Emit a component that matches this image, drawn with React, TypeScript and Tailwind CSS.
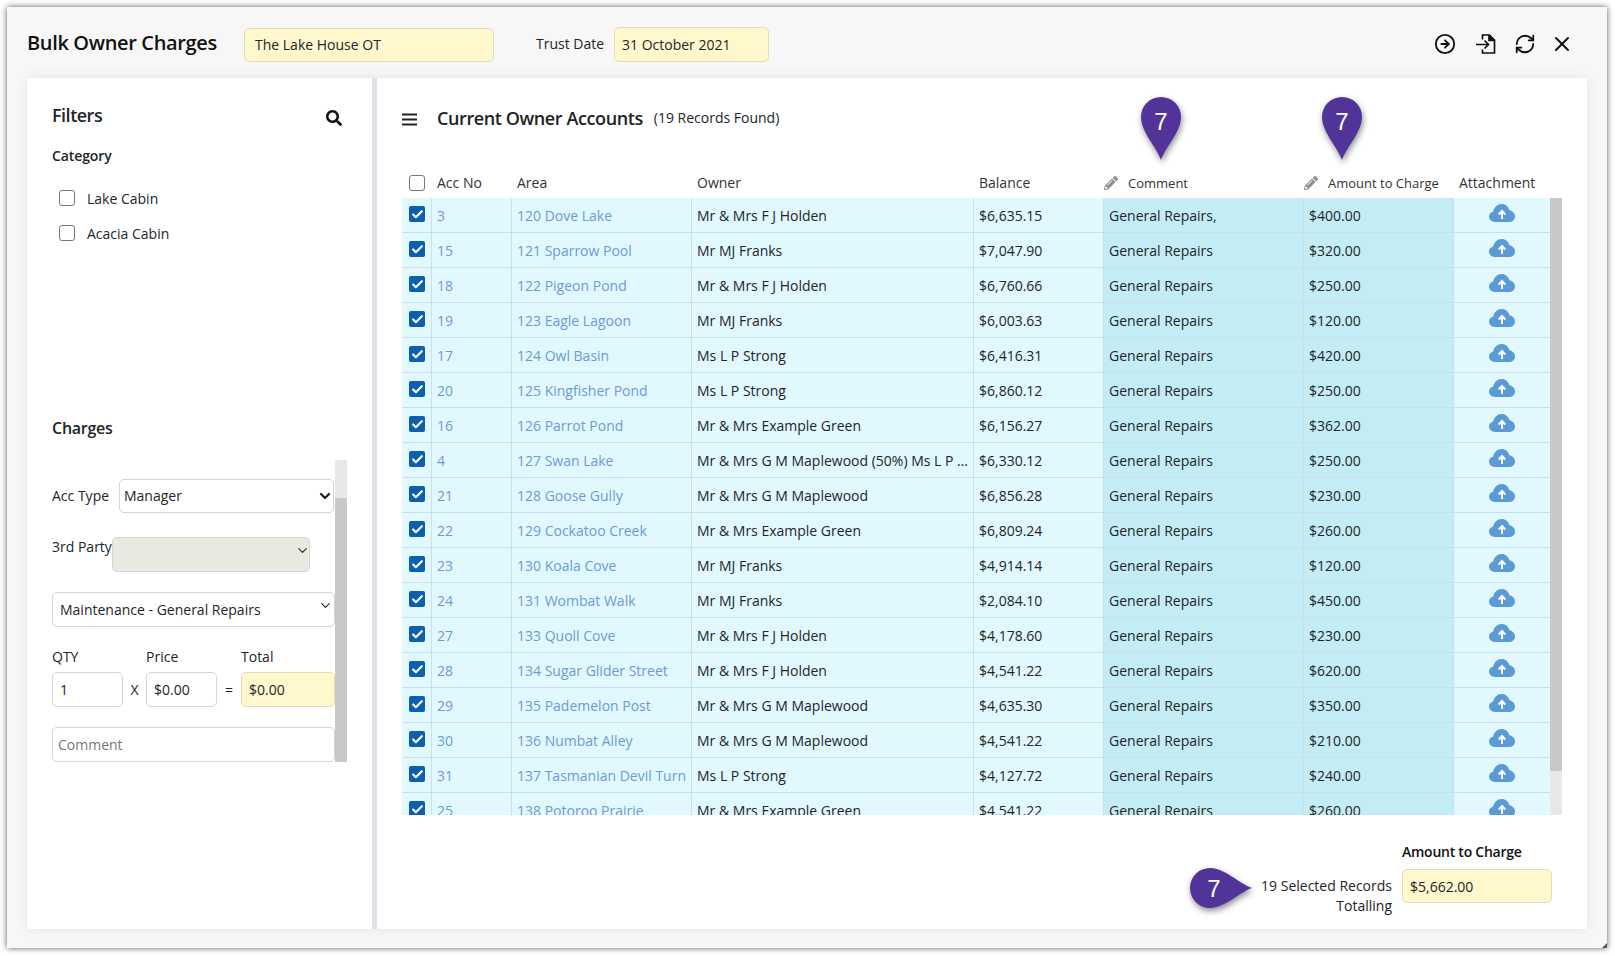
import { Check, ChevronDown, CircleArrowRight, RefreshCw, X } from "lucide-react";
import { FaPencilAlt, FaSearch } from "react-icons/fa";

const rows = [
  ["3", "120 Dove Lake", "Mr & Mrs F J Holden", "$6,635.15", "General Repairs,", "$400.00"],
  ["15", "121 Sparrow Pool", "Mr MJ Franks", "$7,047.90", "General Repairs", "$320.00"],
  ["18", "122 Pigeon Pond", "Mr & Mrs F J Holden", "$6,760.66", "General Repairs", "$250.00"],
  ["19", "123 Eagle Lagoon", "Mr MJ Franks", "$6,003.63", "General Repairs", "$120.00"],
  ["17", "124 Owl Basin", "Ms L P Strong", "$6,416.31", "General Repairs", "$420.00"],
  ["20", "125 Kingfisher Pond", "Ms L P Strong", "$6,860.12", "General Repairs", "$250.00"],
  ["16", "126 Parrot Pond", "Mr & Mrs Example Green", "$6,156.27", "General Repairs", "$362.00"],
  ["4", "127 Swan Lake", "Mr & Mrs G M Maplewood (50%) Ms L P Strong (50%)", "$6,330.12", "General Repairs", "$250.00"],
  ["21", "128 Goose Gully", "Mr & Mrs G M Maplewood", "$6,856.28", "General Repairs", "$230.00"],
  ["22", "129 Cockatoo Creek", "Mr & Mrs Example Green", "$6,809.24", "General Repairs", "$260.00"],
  ["23", "130 Koala Cove", "Mr MJ Franks", "$4,914.14", "General Repairs", "$120.00"],
  ["24", "131 Wombat Walk", "Mr MJ Franks", "$2,084.10", "General Repairs", "$450.00"],
  ["27", "133 Quoll Cove", "Mr & Mrs F J Holden", "$4,178.60", "General Repairs", "$230.00"],
  ["28", "134 Sugar Glider Street", "Mr & Mrs F J Holden", "$4,541.22", "General Repairs", "$620.00"],
  ["29", "135 Pademelon Post", "Mr & Mrs G M Maplewood", "$4,635.30", "General Repairs", "$350.00"],
  ["30", "136 Numbat Alley", "Mr & Mrs G M Maplewood", "$4,541.22", "General Repairs", "$210.00"],
  ["31", "137 Tasmanian Devil Turn", "Ms L P Strong", "$4,127.72", "General Repairs", "$240.00"],
  ["25", "138 Potoroo Prairie", "Mr & Mrs Example Green", "$4,541.22", "General Repairs", "$260.00"],
];

const inputClass = "h-[35px] w-full rounded-[5px] border border-[#d4d4d4] bg-white px-[7px] text-sm text-[#212529] outline-none";
const cellClass = "h-[35px] border-r border-b border-[#c8e0e8] pt-[2px] text-sm";

function Pin({ className }: { className: string }) {
  return (
    <div className={`absolute h-[63px] w-[40px] ${className}`}>
      <svg viewBox="0 0 40 63" className="h-full w-full overflow-visible drop-shadow-[1px_3px_3px_rgba(0,0,0,0.45)]">
        <path d="M20 63C15 49 0 35 0 20A20 20 0 0 1 40 20C40 35 25 49 20 63Z" fill="#523399" />
      </svg>
      <span className="absolute top-[10px] left-0 w-full text-center font-['Liberation_Sans',sans-serif] text-[24px] leading-[30px] text-white">7</span>
    </div>
  );
}

function Tick() {
  return (
    <span className="flex size-4 items-center justify-center rounded-[2px] bg-[#0b5fae]">
      <Check size={13} strokeWidth={4} className="text-white" />
    </span>
  );
}

function CloudUp() {
  return (
    <svg viewBox="0 0 26 18" className="mx-auto mb-[4px] block h-[18px] w-[26px]">
      <path
        d="M6 18C2.5 18 0 15.6 0 12.6C0 10 1.7 8 4.2 7.5C5 3.2 8.5 0 12.6 0C16.4 0 19.5 2.6 20.4 6.2C23.6 6.8 26 9.4 26 12.5C26 15.6 23.5 18 20.5 18Z"
        fill="#5b9bd5"
      />
      <path d="M13 15V7.5M9.7 10.5L13 7L16.3 10.5" fill="none" stroke="#fff" strokeWidth="2" />
    </svg>
  );
}

function Field({ value, disabled, thick, className, chevron }: { value: string; disabled?: boolean; thick?: boolean; className: string; chevron: string }) {
  return (
    <div className={`relative ${className}`}>
      <select
        disabled={disabled}
        defaultValue={value}
        className={`h-full w-full appearance-none rounded-[5px] border border-[#d4d4d4] text-sm text-[#212529] outline-none ${disabled ? "bg-[#e9e9e1]" : "bg-white"} ${thick ? "px-[4px]" : "px-[7px]"}`}
      >
        <option value={value}>{value}</option>
      </select>
      <ChevronDown size={thick ? 16 : 15} strokeWidth={thick ? 3.4 : 1.75} className={`absolute text-[#222] ${chevron}`} />
    </div>
  );
}

export default function App() {
  return (
    <div className="h-[956px] w-[1615px] bg-white p-[7px] pb-[8px] font-['Open_Sans',sans-serif] text-[#212529]">
      <div className="relative flex h-[941px] w-[1600px] flex-col bg-[#f7f7f7] px-[20px] pb-[19px] shadow-[0_0_6px_rgba(0,0,0,0.65)]">
        {/* Title bar */}
        <div className="flex h-[71px] shrink-0 items-center">
          <h1 className="mt-[1px] w-[217px] text-[20px] font-semibold tracking-[-0.35px] text-[#111]">Bulk Owner Charges</h1>
          <input readOnly value="The Lake House OT" className="mt-[4px] h-[34px] w-[250px] rounded-[5px] border border-[#e3dcb8] bg-[#fff8cd] px-[10px] text-sm outline-none" />
          <span className="mt-[2px] ml-[42px] w-[78px] text-sm">Trust Date</span>
          <input readOnly value="31 October 2021" className="mt-[4px] h-[35px] w-[155px] rounded-[5px] border border-[#e3dcb8] bg-[#fff8cd] px-[7px] text-sm outline-none" />
          <div className="mt-[2px] ml-auto flex items-center pr-[13px] text-[#111]">
            <CircleArrowRight size={22} strokeWidth={2} />
            <svg viewBox="0 0 20 20" className="ml-[20px] h-[20px] w-[20px]" fill="none" stroke="currentColor" strokeWidth="1.7">
              <path d="M6.5 5.5V1H13.5L18.5 6V19H6.5V15.5" />
              <path d="M13 1V6.5H18.5" fill="currentColor" />
              <path d="M0 10.5H12M8.5 6.5L12.5 10.5L8.5 14.5" />
            </svg>
            <RefreshCw size={22} strokeWidth={2} className="ml-[18px]" />
            <X size={24} strokeWidth={2} className="ml-[14px]" />
          </div>
        </div>

        <div className="flex min-h-0 flex-1 shadow-[0_0_12px_rgba(0,0,0,0.08)]">
          {/* Filters */}
          <aside className="w-[345px] shrink-0 bg-white pl-[25px]">
            <div className="mt-[26px] flex h-[22px] items-center justify-between pr-[30px]">
              <h2 className="text-lg font-semibold tracking-[-0.5px]">Filters</h2>
              <FaSearch size={16} className="mt-[5px] text-[#111]" />
            </div>
            <div className="mt-[20px] h-[20px] text-sm font-semibold tracking-[-0.1px]">Category</div>
            <div className="mt-[14px]">
              {["Lake Cabin", "Acacia Cabin"].map((name) => (
                <label key={name} className="flex h-[35px] items-center gap-[12px] pl-[7px] text-sm">
                  <input type="checkbox" className="size-4 appearance-none rounded-[3px] border border-[#777] bg-white" />
                  <span className="mt-[2px]">{name}</span>
                </label>
              ))}
            </div>

            <h2 className="mt-[167px] h-[22px] text-base leading-[22px] font-semibold tracking-[-0.25px]">Charges</h2>
            <div className="mt-[21px] flex h-[302px]">
              <div className="w-[283px] shrink-0 pt-[19px]">
                <div className="flex h-[34px] items-center">
                  <span className="w-[67px] shrink-0 text-sm">Acc Type</span>
                  <Field value="Manager" thick className="h-[34px] w-[215px]" chevron="top-[9px] right-[1px]" />
                </div>
                <div className="mt-[24px] flex h-[35px] items-start">
                  <span className="w-[60px] shrink-0 text-sm leading-[20px]">3rd Party</span>
                  <Field value="" disabled className="h-[35px] w-[198px]" chevron="top-[6px] right-0" />
                </div>
                <Field value="Maintenance - General Repairs" className="mt-[20px] h-[35px] w-full" chevron="top-[6px] right-[2px]" />
                <div className="mt-[20px] grid grid-cols-[71px_23px_71px_24px_94px] text-sm">
                  <span className="col-span-2 h-[25px]">QTY</span>
                  <span className="col-span-2 h-[25px]">Price</span>
                  <span className="h-[25px]">Total</span>
                  <input readOnly value="1" className={inputClass} />
                  <span className="self-center text-center">X</span>
                  <input readOnly value="$0.00" className={inputClass} />
                  <span className="self-center text-center">=</span>
                  <input readOnly value="$0.00" className="h-[35px] w-full rounded-[5px] border border-[#e3dcb8] bg-[#fff8cd] px-[7px] text-sm outline-none" />
                </div>
                <input
                  placeholder="Comment"
                  className="mt-[20px] h-[35px] w-full rounded-[5px] border border-[#d4d4d4] bg-white px-[5px] text-sm outline-none placeholder:text-[#777]"
                />
              </div>
              <div className="w-[12px] bg-[#e8e8e8] pt-[38px]">
                <div className="h-full bg-[#c8c8c8]" />
              </div>
            </div>
          </aside>

          <div className="w-[5px] shrink-0 bg-[#e2dfe8]" />

          {/* Accounts */}
          <main className="relative min-w-0 flex-1 bg-white pr-[25px] pl-[25px]">
            <div className="mt-[25px] flex h-[30px] items-center">
              <svg viewBox="0 0 15 13" className="mt-[2px] h-[13px] w-[15px] text-[#222]">
                <path d="M0 1.5H15M0 6.5H15M0 11.5H15" stroke="currentColor" strokeWidth="2" />
              </svg>
              <h2 className="ml-[20px] text-lg font-semibold tracking-[-0.4px] text-[#222]">Current Owner Accounts</h2>
              <span className="ml-[11px] text-sm">(19 Records Found)</span>
            </div>

            <div className="mt-[33px] flex h-[649px]">
              <div className="min-w-0 flex-1 overflow-hidden">
                <table className="w-[1149px] table-fixed border-separate border-spacing-0">
                  <colgroup>
                    <col className="w-[30px]" />
                    <col className="w-[80px]" />
                    <col className="w-[180px]" />
                    <col className="w-[282px]" />
                    <col className="w-[130px]" />
                    <col className="w-[200px]" />
                    <col className="w-[150px]" />
                    <col className="w-[97px]" />
                  </colgroup>
                  <thead>
                    <tr className="h-[32px] text-left text-sm font-medium text-[#333]">
                      <th className="pb-[1px] pl-[7px] align-middle">
                        <input type="checkbox" className="mt-[3px] block size-4 appearance-none rounded-[3px] border border-[#777] bg-white" />
                      </th>
                      <th className="px-[5px] pt-[2px] font-medium">Acc No</th>
                      <th className="px-[5px] pt-[2px] font-medium">Area</th>
                      <th className="px-[5px] pt-[2px] font-medium">Owner</th>
                      <th className="px-[5px] pt-[2px] font-medium">Balance</th>
                      <th className="pt-[2px] font-medium">
                        <span className="flex items-center text-[13px]">
                          <FaPencilAlt size={14} className="text-[#8f8f8f]" />
                          <span className="ml-[10px]">Comment</span>
                        </span>
                      </th>
                      <th className="pt-[2px] font-medium">
                        <span className="flex items-center text-[13px]">
                          <FaPencilAlt size={14} className="text-[#8f8f8f]" />
                          <span className="ml-[10px] whitespace-nowrap">Amount to Charge</span>
                        </span>
                      </th>
                      <th className="px-[5px] pt-[2px] font-medium">Attachment</th>
                    </tr>
                  </thead>
                  <tbody className="bg-[#e1f8ff]">
                    {rows.map((row) => (
                      <tr key={row[0]}>
                        <td className={`${cellClass} !pt-0`}>
                          <div className="mb-[2px] flex justify-center pl-[1px]"><Tick /></div>
                        </td>
                        <td className={`${cellClass} px-[5px] text-[#6d9bd3]`}>{row[0]}</td>
                        <td className={`${cellClass} truncate pr-[1px] pl-[5px] text-[#6d9bd3]`}>{row[1]}</td>
                        <td className={`${cellClass} truncate pr-[2px] pl-[5px]`}>{row[2]}</td>
                        <td className={`${cellClass} px-[5px]`}>{row[3]}</td>
                        <td className={`${cellClass} bg-[#c3ecf5] px-[5px]`}>{row[4]}</td>
                        <td className={`${cellClass} bg-[#c3ecf5] px-[5px]`}>{row[5]}</td>
                        <td className={`${cellClass} !border-r-0 pr-[2px] !pt-0`}>
                          <CloudUp />
                        </td>
                      </tr>
                    ))}
                  </tbody>
                </table>
              </div>
              <div className="mt-[32px] w-[12px] shrink-0 bg-[#e8e8e8]">
                <div className="h-[573px] bg-[#c8c8c8]" />
              </div>
            </div>

            <div className="mt-[27px] flex justify-end pr-[10px]">
              <div className="mt-[34px] mr-[10px] text-right text-sm leading-[20px]">
                <div>19 Selected Records</div>
                <div>Totalling</div>
              </div>
              <div className="w-[150px]">
                <div className="mb-[7px] h-[20px] text-sm leading-[20px] font-semibold tracking-[-0.25px] whitespace-nowrap text-[#111]">Amount to Charge</div>
                <input readOnly value="$5,662.00" className="h-[34px] w-full rounded-[5px] border border-[#e3dcb8] bg-[#fff8cd] px-[7px] text-sm outline-none" />
              </div>
            </div>

            <Pin className="top-[19px] left-[764px]" />
            <Pin className="top-[19px] left-[945px]" />
            <div className="absolute top-[790px] left-[813px] h-[40px] w-[62px]">
              <svg viewBox="0 0 62 40" className="h-full w-full overflow-visible drop-shadow-[1px_3px_3px_rgba(0,0,0,0.45)]">
                <path d="M62 20C48 25 35 40 20 40A20 20 0 0 1 20 0C35 0 48 15 62 20Z" fill="#523399" />
              </svg>
              <span className="absolute top-[6px] left-0 w-[48px] text-center font-['Liberation_Sans',sans-serif] text-[24px] leading-[30px] text-white">7</span>
            </div>
          </main>
        </div>

        <svg viewBox="0 0 5 5" className="absolute right-0 bottom-0 size-[5px]">
          <path d="M5 0V5H0Z" fill="#555" />
        </svg>
      </div>
    </div>
  );
}
